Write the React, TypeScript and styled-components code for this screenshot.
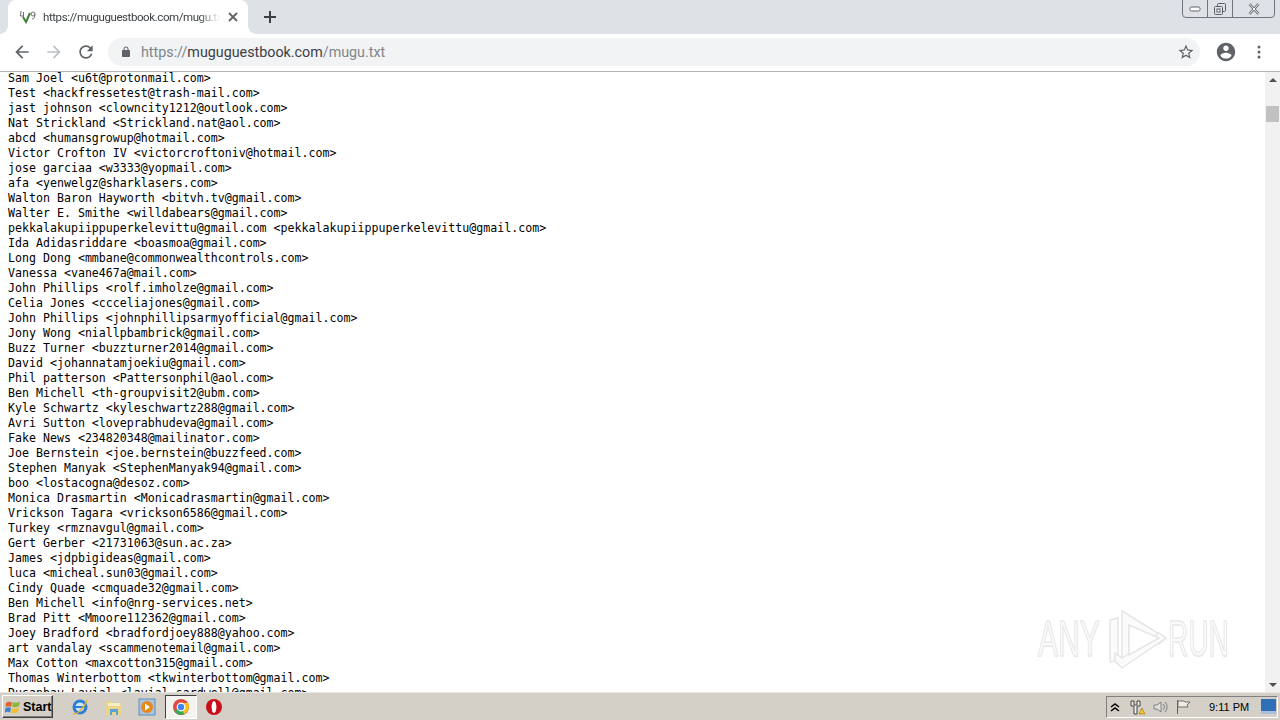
import styled, { createGlobalStyle } from "styled-components";

const Global = createGlobalStyle`
  html, body {
    margin: 0;
    padding: 0;
    overflow: hidden;
    background: #fff;
  }
`;

const Screen = styled.div`
  display: flex;
  flex-direction: column;
  width: 1280px;
  height: 720px;
  overflow: hidden;
  position: relative;
`;

const TabStrip = styled.div`
  display: flex;
  height: 34px;
  padding-left: 8px;
  background: #dee1e6;
  flex: none;
  position: relative;
`;

const Tab = styled.div`
  display: flex;
  align-items: center;
  position: relative;
  width: 240px;
  height: 34px;
  padding: 0 10px 0 12px;
  box-sizing: border-box;
  background: #fff;
  border-radius: 8px 8px 0 0;

  &::before,
  &::after {
    content: "";
    position: absolute;
    bottom: 0;
    width: 8px;
    height: 8px;
  }
  &::before {
    left: -8px;
    background: radial-gradient(circle at 0 0, transparent 7.5px, #fff 8px);
  }
  &::after {
    right: -8px;
    background: radial-gradient(circle at 100% 0, transparent 7.5px, #fff 8px);
  }
`;

const Favicon = styled.svg`
  width: 16px;
  height: 14px;
  margin-right: 7px;
  flex: none;
`;

const TabTitle = styled.div`
  flex: 1;
  min-width: 0;
  margin-right: 8px;
  overflow: hidden;
  white-space: nowrap;
  font: 11.5px "Roboto", "Liberation Sans", sans-serif;
  letter-spacing: -0.42px;
  color: #3c4043;
  -webkit-mask-image: linear-gradient(90deg, #000 88%, transparent 100%);
  mask-image: linear-gradient(90deg, #000 88%, transparent 100%);
`;

const NewTab = styled.svg`
  width: 14px;
  height: 14px;
  margin: 10px 0 0 15px;
`;

const WindowControls = styled.div`
  position: absolute;
  top: -1px;
  right: 5px;
  display: flex;
  height: 17px;
  border: 1px solid #70757c;
  border-radius: 0 0 4px 4px;
`;

const WinButton = styled.div<{ $w: number; $line?: boolean }>`
  display: flex;
  align-items: center;
  justify-content: center;
  width: ${(p) => p.$w}px;
  border-right: ${(p) => (p.$line ? "1px solid #70757c" : "none")};
`;

const Toolbar = styled.div`
  display: flex;
  align-items: center;
  height: 38px;
  flex: none;
  box-sizing: border-box;
  padding: 0 0 1px 12px;
  background: #fff;
  border-bottom: 1px solid #b4b4b4;
`;

const NavIcon = styled.svg<{ $gap: number; $size?: number }>`
  width: ${(p) => p.$size ?? 20}px;
  height: ${(p) => p.$size ?? 20}px;
  margin-right: ${(p) => p.$gap}px;
  flex: none;
`;

const Omnibox = styled.div`
  display: flex;
  align-items: center;
  width: 1092px;
  height: 28px;
  margin-left: 2px;
  padding: 0 0 0 12px;
  box-sizing: border-box;
  background: #f1f3f4;
  border-radius: 14px;
  flex: none;
`;

const UrlText = styled.div`
  flex: 1;
  margin-left: 9px;
  font: 14.3px/28px "Roboto", "Liberation Sans", sans-serif;
  color: #80868b;
`;

const UrlHost = styled.span`
  color: #3c4043;
`;

const Actions = styled.div`
  display: flex;
  align-items: center;
  margin-left: -23px;
`;

const Main = styled.div`
  display: flex;
  flex: 1;
  min-height: 0;
  position: relative;
  background: #fff;
`;

const Page = styled.pre`
  flex: 1;
  margin: -1px 0 0;
  padding-left: 8px;
  overflow: hidden;
  font: 11.62px/15px "DejaVu Sans Mono", "Liberation Mono", monospace;
  color: #000;
`;

const Scrollbar = styled.div`
  display: flex;
  flex-direction: column;
  align-items: center;
  width: 15px;
  flex: none;
  background: #f1f1f1;
`;

const ArrowUp = styled.div`
  width: 0;
  height: 0;
  margin-top: 6px;
  border-left: 4px solid transparent;
  border-right: 4px solid transparent;
  border-bottom: 4px solid #505050;
`;

const Thumb = styled.div`
  width: 13px;
  height: 16px;
  margin-top: 24px;
  background: #c1c1c1;
`;

const ArrowDown = styled.div`
  width: 0;
  height: 0;
  margin: auto 0 5px;
  border-left: 4px solid transparent;
  border-right: 4px solid transparent;
  border-top: 4px solid #505050;
`;

const Watermark = styled.div`
  position: absolute;
  left: 1038px;
  top: 536px;
  display: flex;
  align-items: center;
  font: 50px/1 "Liberation Sans", sans-serif;
  color: #fbfbfb;
  -webkit-text-stroke: 1.5px #e9e9e9;
  text-shadow: 1px 1px 2px #ececec;
  pointer-events: none;
`;

const WatermarkWord = styled.span<{ $w: number; $scale: number }>`
  display: inline-block;
  width: ${(p) => p.$w}px;
  transform-origin: left center;
  transform: scaleX(${(p) => p.$scale});
  white-space: nowrap;
`;

const Taskbar = styled.div`
  display: flex;
  align-items: center;
  height: 28px;
  flex: none;
  padding: 0 2px;
  box-sizing: border-box;
  background: #d4d0c8;
  border-top: 1px solid #e8e6e1;
`;

const StartButton = styled.div`
  display: flex;
  align-items: center;
  gap: 2px;
  width: 51px;
  height: 23px;
  padding-left: 2px;
  box-sizing: border-box;
  background: #d4d0c8;
  border: 1px solid;
  border-color: #fff #404040 #404040 #fff;
  box-shadow: inset -1px -1px 0 #808080;
  font: bold 12.5px "Liberation Sans", sans-serif;
  color: #000;
`;

const QuickLaunch = styled.div`
  display: flex;
  align-items: center;
  gap: 1.5px;
  margin-left: 11px;
  flex: 1;
`;

const TaskSlot = styled.div<{ $active?: boolean }>`
  display: flex;
  align-items: center;
  justify-content: center;
  width: 32px;
  height: 24px;
  box-sizing: border-box;
  ${(p) =>
    p.$active
      ? `background: #f4f3f0;
         border: 1px solid;
         border-color: #404040 #fff #fff #404040;`
      : ""}
`;

const TaskIcon = styled.svg`
  width: 18px;
  height: 18px;
`;

const Tray = styled.div`
  display: flex;
  align-items: center;
  width: 172px;
  height: 22px;
  box-sizing: border-box;
  border: 1px solid;
  border-color: #808080 #fff #fff #808080;
`;

const TrayIcon = styled.svg<{ $gap: number }>`
  width: 16px;
  height: 16px;
  margin-right: ${(p) => p.$gap}px;
  flex: none;
`;

const Clock = styled.div`
  width: 52px;
  flex: none;
  font: 11px "Liberation Sans", sans-serif;
  color: #000;
`;

const lines = [
  "Sam Joel <u6t@protonmail.com>",
  "Test <hackfressetest@trash-mail.com>",
  "jast johnson <clowncity1212@outlook.com>",
  "Nat Strickland <Strickland.nat@aol.com>",
  "abcd <humansgrowup@hotmail.com>",
  "Victor Crofton IV <victorcroftoniv@hotmail.com>",
  "jose garciaa <w3333@yopmail.com>",
  "afa <yenwelgz@sharklasers.com>",
  "Walton Baron Hayworth <bitvh.tv@gmail.com>",
  "Walter E. Smithe <willdabears@gmail.com>",
  "pekkalakupiippuperkelevittu@gmail.com <pekkalakupiippuperkelevittu@gmail.com>",
  "Ida Adidasriddare <boasmoa@gmail.com>",
  "Long Dong <mmbane@commonwealthcontrols.com>",
  "Vanessa <vane467a@mail.com>",
  "John Phillips <rolf.imholze@gmail.com>",
  "Celia Jones <ccceliajones@gmail.com>",
  "John Phillips <johnphillipsarmyofficial@gmail.com>",
  "Jony Wong <niallpbambrick@gmail.com>",
  "Buzz Turner <buzzturner2014@gmail.com>",
  "David <johannatamjoekiu@gmail.com>",
  "Phil patterson <Pattersonphil@aol.com>",
  "Ben Michell <th-groupvisit2@ubm.com>",
  "Kyle Schwartz <kyleschwartz288@gmail.com>",
  "Avri Sutton <loveprabhudeva@gmail.com>",
  "Fake News <234820348@mailinator.com>",
  "Joe Bernstein <joe.bernstein@buzzfeed.com>",
  "Stephen Manyak <StephenManyak94@gmail.com>",
  "boo <lostacogna@desoz.com>",
  "Monica Drasmartin <Monicadrasmartin@gmail.com>",
  "Vrickson Tagara <vrickson6586@gmail.com>",
  "Turkey <rmznavgul@gmail.com>",
  "Gert Gerber <21731063@sun.ac.za>",
  "James <jdpbigideas@gmail.com>",
  "luca <micheal.sun03@gmail.com>",
  "Cindy Quade <cmquade32@gmail.com>",
  "Ben Michell <info@nrg-services.net>",
  "Brad Pitt <Mmoore112362@gmail.com>",
  "Joey Bradford <bradfordjoey888@yahoo.com>",
  "art vandalay <scammenotemail@gmail.com>",
  "Max Cotton <maxcotton315@gmail.com>",
  "Thomas Winterbottom <tkwinterbottom@gmail.com>",
  "Dusanbay Lavial <lavial.sardwell@gmail.com>",
];

function App() {
  return (
    <Screen>
      <Global />
      <TabStrip>
        <Tab>
          <Favicon viewBox="0 0 16 14">
            <path d="M1 1L0.5 6H4M3.5 2v7" fill="none" stroke="#6a6f74" strokeWidth="1" />
            <path d="M3 7l3 5 4-9" fill="none" stroke="#3f7d3a" strokeWidth="2" />
            <circle cx="13" cy="4" r="2" fill="none" stroke="#6a6f74" strokeWidth="1" />
            <path d="M15 4c0 3-1 5-3 5" fill="none" stroke="#6a6f74" strokeWidth="1" />
          </Favicon>
          <TabTitle>https://muguguestbook.com/mugu.txt</TabTitle>
          <svg width="10" height="10" viewBox="0 0 10 10">
            <path d="M1 1l8 8M9 1l-8 8" stroke="#5f6368" strokeWidth="1.8" />
          </svg>
        </Tab>
        <NewTab viewBox="0 0 14 14">
          <path d="M7 1v12M1 7h12" stroke="#3c4043" strokeWidth="2" />
        </NewTab>
        <WindowControls>
          <WinButton $w={24} $line>
            <svg width="12" height="6" viewBox="0 0 12 6">
              <rect x="1" y="1" width="10" height="4" rx="1.5" fill="#fff" stroke="#5c6066" />
            </svg>
          </WinButton>
          <WinButton $w={24} $line>
            <svg width="14" height="14" viewBox="0 0 14 14">
              <rect x="4.5" y="1.5" width="8" height="8" rx="1" fill="none" stroke="#5c6066" />
              <rect x="1.5" y="4.5" width="8" height="8" rx="1" fill="#dee1e6" stroke="#5c6066" />
              <rect x="4" y="7" width="3" height="3" fill="#fff" stroke="#5c6066" />
            </svg>
          </WinButton>
          <WinButton $w={41}>
            <svg width="12" height="12" viewBox="0 0 12 12">
              <path d="M1.5 1l9 10M10.5 1l-9 10" stroke="#5c6066" strokeWidth="2.6" />
              <path d="M1.5 1l9 10M10.5 1l-9 10" stroke="#fff" strokeWidth="1" />
            </svg>
          </WinButton>
        </WindowControls>
      </TabStrip>
      <Toolbar>
        <NavIcon $gap={12} viewBox="0 0 24 24">
          <path fill="#5f6368" d="M20 11H7.83l5.59-5.59L12 4l-8 8 8 8 1.41-1.41L7.83 13H20v-2z" />
        </NavIcon>
        <NavIcon $gap={12} viewBox="0 0 24 24">
          <path fill="#bdc1c6" d="M12 4l-1.41 1.41L16.17 11H4v2h12.17l-5.58 5.59L12 20l8-8z" />
        </NavIcon>
        <NavIcon $gap={10} viewBox="0 0 24 24">
          <path
            fill="#5f6368"
            d="M17.65 6.35C16.2 4.9 14.21 4 12 4c-4.42 0-7.99 3.58-7.99 8s3.57 8 7.99 8c3.73 0 6.84-2.55 7.73-6h-2.08c-.82 2.33-3.04 4-5.65 4-3.31 0-6-2.69-6-6s2.69-6 6-6c1.66 0 3.14.69 4.22 1.78L13 11h7V4l-2.35 2.35z"
          />
        </NavIcon>
        <Omnibox>
          <NavIcon $gap={0} $size={12} viewBox="0 0 24 24">
            <path
              fill="#5f6368"
              d="M18 8h-1V6c0-2.76-2.24-5-5-5S7 3.24 7 6v2H6c-1.1 0-2 .9-2 2v10c0 1.1.9 2 2 2h12c1.1 0 2-.9 2-2V10c0-1.1-.9-2-2-2zM9 8V6c0-1.66 1.34-3 3-3s3 1.34 3 3v2H9z"
            />
          </NavIcon>
          <UrlText>
            https://<UrlHost>muguguestbook.com</UrlHost>/mugu.txt
          </UrlText>
        </Omnibox>
        <Actions>
          <NavIcon $gap={20} $size={18} viewBox="0 0 24 24">
            <path
              fill="#5f6368"
              d="M22 9.24l-7.19-.62L12 2 9.19 8.63 2 9.24l5.46 4.73L5.82 21 12 17.27 18.18 21l-1.63-7.03L22 9.24zM12 15.4l-3.76 2.27 1-4.28-3.32-2.88 4.38-.38L12 6.1l1.71 4.04 4.38.38-3.32 2.88 1 4.28L12 15.4z"
            />
          </NavIcon>
          <NavIcon $gap={14} $size={22} viewBox="0 0 24 24">
            <path
              fill="#5f6368"
              d="M12 2C6.48 2 2 6.48 2 12s4.48 10 10 10 10-4.48 10-10S17.52 2 12 2zm0 3c1.66 0 3 1.34 3 3s-1.34 3-3 3-3-1.34-3-3 1.34-3 3-3zm0 14.2c-2.5 0-4.71-1.28-6-3.22.03-1.99 4-3.08 6-3.08 1.99 0 5.97 1.09 6 3.08-1.29 1.94-3.5 3.22-6 3.22z"
            />
          </NavIcon>
          <NavIcon $gap={0} $size={16} viewBox="0 0 16 16">
            <circle cx="8" cy="3" r="1.5" fill="#5f6368" />
            <circle cx="8" cy="8" r="1.5" fill="#5f6368" />
            <circle cx="8" cy="13" r="1.5" fill="#5f6368" />
          </NavIcon>
        </Actions>
      </Toolbar>
      <Main>
        <Page>{lines.join("\n")}</Page>
        <Scrollbar>
          <ArrowUp />
          <Thumb />
          <ArrowDown />
        </Scrollbar>
        <Watermark>
          <WatermarkWord $w={70} $scale={0.6}>ANY</WatermarkWord>
          <svg width="60" height="62" viewBox="0 0 60 62">
            <g fill="#fbfbfb" stroke="#e6e6e6" strokeWidth="1.5">
              <path d="M2 12l8-2v42l-8 2z" />
              <path d="M14 3l44 27-7 6-30-19v30l-7 5z" />
              <path d="M14 60l44-30-7-5-37 25-7-5 0 8z" />
              <path d="M21 17l30 13-30 17z" fill="#fff" />
            </g>
          </svg>
          <WatermarkWord $w={64} $scale={0.56}>
            RUN
          </WatermarkWord>
        </Watermark>
      </Main>
      <Taskbar>
        <StartButton>
          <svg width="16" height="16" viewBox="0 0 16 16">
            <path d="M1 4c2-1.5 4-1.5 6-.5L6 8C4 7 2.5 7 0.5 8z" fill="#e2602b" />
            <path d="M8 3c2 1 4 1 7-.5L14 7c-2.5 1.5-5 1.5-7 .5z" fill="#8cb63c" />
            <path d="M.5 9c2-1 3.5-1 5.5 0l-1 4.5c-2-1-3.5-1-5.5.5z" fill="#3c83d0" />
            <path d="M7 9c2 1 4.5 1 7-.5L13 13c-2.5 1.5-5 1.5-7 .5z" fill="#f0c030" />
          </svg>
          Start
        </StartButton>
        <QuickLaunch>
          <TaskSlot>
            <TaskIcon viewBox="0 0 18 18">
              <circle cx="9" cy="9" r="6" fill="#cfe6f8" stroke="#2a7fd4" strokeWidth="3" />
              <path d="M3 9h12" stroke="#2a7fd4" strokeWidth="2" />
              <path d="M2 16c3 1 11-5 14-14" fill="none" stroke="#e8b030" strokeWidth="1.4" />
            </TaskIcon>
          </TaskSlot>
          <TaskSlot>
            <TaskIcon viewBox="0 0 18 18">
              <path d="M1 3h6l1 2h9v12H1z" fill="#e8d58a" />
              <rect x="3" y="5" width="12" height="3" fill="#f5edc8" />
              <path d="M5 17v-6h8v6h-2v-3H7v3z" fill="#5ba4d0" />
            </TaskIcon>
          </TaskSlot>
          <TaskSlot>
            <TaskIcon viewBox="0 0 18 18">
              <rect x="1" y="1" width="16" height="16" fill="#a9c4dc" stroke="#5c8fb8" />
              <circle cx="9" cy="9" r="6" fill="#e8881c" />
              <path d="M7 5.5l5 3.5-5 3.5z" fill="#fff" />
            </TaskIcon>
          </TaskSlot>
          <TaskSlot $active>
            <TaskIcon viewBox="0 0 18 18">
              <circle cx="9" cy="9" r="8" fill="#dd4b3e" />
              <path d="M9 9L2.1 13a8 8 0 0 0 10.9 2.9z" fill="#3aa757" />
              <path d="M9 5h7a8 8 0 0 1-4 11l-3-7z" fill="#f5c518" />
              <circle cx="9" cy="9" r="3.8" fill="#4285f4" stroke="#fff" strokeWidth="1.2" />
            </TaskIcon>
          </TaskSlot>
          <TaskSlot>
            <TaskIcon viewBox="0 0 18 18">
              <circle cx="9" cy="9" r="8" fill="#c8101a" />
              <ellipse cx="9" cy="9" rx="2.4" ry="6" fill="#fff" />
            </TaskIcon>
          </TaskSlot>
        </QuickLaunch>
        <Tray>
          <TrayIcon $gap={6} viewBox="0 0 16 16">
            <path d="M4 8l4-3 4 3M4 12l4-3 4 3" fill="none" stroke="#000" strokeWidth="1.5" />
          </TrayIcon>
          <TrayIcon $gap={7} viewBox="0 0 16 16">
            <path d="M2 2h3v4h3V2h3v5H8v8H5V7H2z" fill="#f0eee8" stroke="#444" />
            <path d="M10 15l3-6 3 6z" fill="#f0c820" stroke="#806000" strokeWidth=".5" />
          </TrayIcon>
          <TrayIcon $gap={7} viewBox="0 0 16 16">
            <path d="M2 6h3l4-3v10l-4-3H2z" fill="#e0e0dc" stroke="#808080" />
            <path d="M11 5a4 4 0 0 1 0 6M13 3a7 7 0 0 1 0 10" fill="none" stroke="#808080" />
          </TrayIcon>
          <TrayIcon $gap={18} viewBox="0 0 16 16">
            <path d="M2.5 1v14" stroke="#606060" />
            <path d="M3 2h6l1 1h5l-3 3 1 2H3z" fill="#eeece6" stroke="#707070" />
          </TrayIcon>
          <Clock>9:11 PM</Clock>
          <svg width="15" height="15" viewBox="0 0 15 15">
            <rect width="15" height="15" fill="#2f6fb8" />
            <rect y="12" width="15" height="3" fill="#a8c0d8" />
          </svg>
        </Tray>
      </Taskbar>
    </Screen>
  );
}

export default App;
